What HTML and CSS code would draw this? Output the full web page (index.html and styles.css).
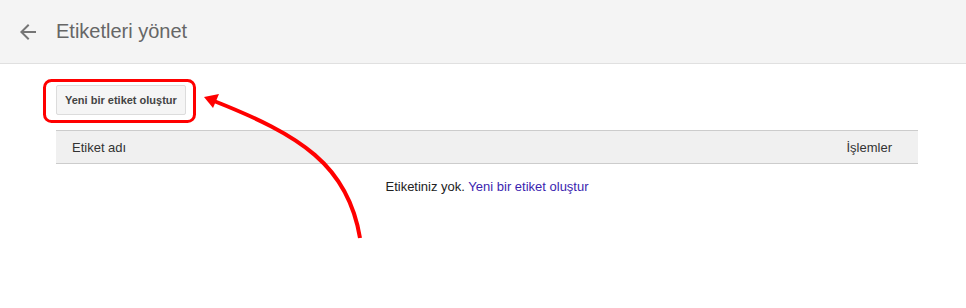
FILE: index.html
```html
<!DOCTYPE html>
<html lang="tr">
<head>
  <meta charset="UTF-8" />
  <title>Etiketleri yönet</title>
  <link rel="stylesheet" href="styles.css">
</head>
<body>
  <header class="topbar">
    <button class="back" aria-label="Geri">
      <svg width="24" height="24" viewBox="0 0 24 24"><path d="M20 11H7.83l5.59-5.59L12 4l-8 8 8 8 1.41-1.41L7.83 13H20v-2z" fill="#757575"/></svg>
    </button>
    <h1>Etiketleri yönet</h1>
  </header>

  <main class="page">
    <div class="actions">
      <button class="btn">Yeni bir etiket oluştur</button>
    </div>
    <div class="table-head">
      <span>Etiket adı</span>
      <span>İşlemler</span>
    </div>
    <p class="empty">Etiketiniz yok. <a href="#">Yeni bir etiket oluştur</a></p>
  </main>

  <svg class="annot" width="966" height="308" viewBox="0 0 966 308">
    <rect x="44.5" y="80.5" width="150" height="41" rx="7" fill="none" stroke="#ff0000" stroke-width="3"/>
    <path d="M360 238 C 348 165, 300 135, 214 101" fill="none" stroke="#ff0000" stroke-width="4"/>
    <polygon points="204,97 219,94 213,108" fill="#ff0000"/>
  </svg>
</body>
</html>
```

FILE: styles.css
```css
* {
  margin: 0;
  padding: 0;
  box-sizing: border-box;
}
body {
  font-family: Arial, 'Liberation Sans', sans-serif;
  background: #fff;
  color: #222;
  width: 966px;
  height: 308px;
  overflow: hidden;
  position: relative;
}
.topbar {
  height: 64px;
  background: #f4f4f4;
  border-bottom: 1px solid #e0e0e0;
  display: flex;
  align-items: center;
  padding-left: 15px;
}
.back {
  background: none;
  border: none;
  width: 26px;
  height: 26px;
  display: flex;
  align-items: center;
  justify-content: center;
  margin-right: 15px;
}
.topbar h1 {
  font-size: 20px;
  font-weight: normal;
  color: #666;
  margin-top: -1px;
}
.page {
  padding: 21px 48px 0 56px;
}
.actions {
  display: flex;
  height: 45px;
}
.btn {
  font-family: Arial, 'Liberation Sans', sans-serif;
  font-size: 11px;
  font-weight: bold;
  color: #444;
  background: #f5f5f5;
  border: 1px solid #dcdcdc;
  border-radius: 2px;
  height: 30px;
  padding: 0 8px;
}
.table-head {
  display: flex;
  justify-content: space-between;
  align-items: center;
  height: 34px;
  background: #f0f0f0;
  border-top: 1px solid #ccc;
  border-bottom: 1px solid #ccc;
  padding: 0 26px 0 16px;
  font-size: 13px;
  color: #333;
}
.empty {
  text-align: center;
  font-size: 13px;
  color: #222;
  margin-top: 15px;
}
.empty a {
  color: #3b1fb0;
  text-decoration: none;
}
.annot {
  position: absolute;
  left: 0;
  top: 0;
  pointer-events: none;
}
```
